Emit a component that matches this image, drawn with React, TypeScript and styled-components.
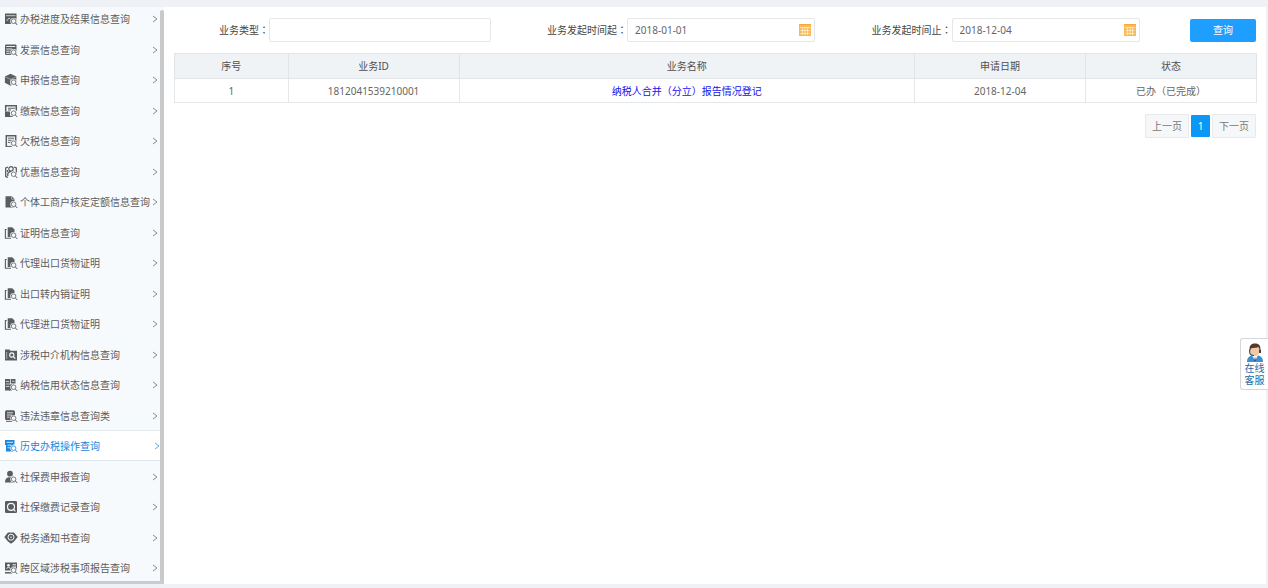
import React from "react";
import styled, { createGlobalStyle } from "styled-components";

const GlobalStyle = createGlobalStyle`
  * { box-sizing: border-box; }
  html, body, #root { height: 100%; }
  body {
    margin: 0;
    background: #eff1f6;
    color: #666;
    font: 10px/16px "Noto Sans", "Noto Sans CJK SC", sans-serif;
  }
  button, input { font: inherit; color: inherit; }
`;

const Page = styled.div`
  display: flex;
  min-height: 100%;
  padding: 7px 2px 4px 0;
`;

const Sidebar = styled.nav`
  display: flex;
  flex: none;
  width: 164px;
  background: #f6fafd;
  border-bottom: 3px solid #cbcccd;
`;

const Menu = styled.ul`
  flex: 1;
  display: flex;
  flex-direction: column;
  justify-content: space-between;
  margin: 0;
  padding: 0 0 1px;
  list-style: none;
`;

const Rail = styled.div`
  width: 4px;
  margin-top: 3px;
  border-radius: 2px 2px 0 0;
  background: #c8c9ca;
`;

const MenuItem = styled.li`
  height: 24px;
`;

const MenuLink = styled.a<{ $active?: boolean }>`
  display: flex;
  align-items: center;
  gap: 2px;
  height: 30px;
  margin: -3px 0;
  padding: 0 ${(p) => (p.$active ? 0 : 2)}px 0 4px;
  color: ${(p) => (p.$active ? "#1787e0" : "#5c5c5c")};
  background: ${(p) => (p.$active ? "#fff" : "transparent")};
  box-shadow: ${(p) => (p.$active ? "0 -1px #e3eaee, inset 0 -1px #dce8ee" : "none")};
  text-decoration: none;
  white-space: nowrap;
`;

const MenuText = styled.span`
  flex: 1;
  min-width: 0;
`;

const IconSvg = styled.svg`
  flex: none;
  width: 14px;
  height: 14px;
`;

const Chevron = styled.svg`
  flex: none;
  width: 6px;
  height: 8px;
  margin-left: -6px;
  fill: none;
  stroke: currentColor;
  opacity: 0.7;
`;

const Main = styled.main`
  flex: 1;
  min-width: 0;
  padding: 11px 9px 20px 10px;
  background: #fff;
`;

const Filters = styled.form`
  display: grid;
  grid-template-columns: 317fr 324fr 325fr 117fr;
  align-items: center;
  height: 24px;
  margin-bottom: 11px;
`;

const Field = styled.div`
  display: flex;
  align-items: center;
`;

const Label = styled.label`
  flex: 1;
  color: #444;
  text-align: right;
  white-space: nowrap;
`;

const Colon = styled.span`
  font-family: "Noto Sans CJK JP", sans-serif;
`;

const InputBox = styled.div<{ $share: number }>`
  display: flex;
  align-items: center;
  width: ${(p) => p.$share}%;
  height: 24px;
  padding: 0 3px 0 7px;
  border: 1px solid #e4e6e8;
  border-radius: 2px;
  background: #fff;
`;

const TextInput = styled.input`
  flex: 1;
  min-width: 0;
  height: 20px;
  padding: 0;
  border: 0;
  outline: 0;
  background: transparent;
`;

const CalendarButton = styled.button`
  display: flex;
  padding: 0;
  border: 0;
  background: none;
  cursor: pointer;
`;

const SearchButton = styled.button`
  justify-self: end;
  width: 66px;
  height: 23px;
  margin-right: 1px;
  padding: 0;
  border: 0;
  border-radius: 2px;
  background: #1e9fff;
  color: #fff;
  cursor: pointer;
`;

const Table = styled.table`
  width: 100%;
  border-collapse: collapse;
  table-layout: fixed;
  text-align: center;
`;

const Col = styled.col<{ $share: number }>`
  width: ${(p) => p.$share}%;
`;

const HeadCell = styled.th`
  height: 25px;
  padding: 0;
  border: 1px solid #e1e5e8;
  background: #eff3f6;
  color: #505050;
  font-weight: 400;
`;

const Cell = styled.td`
  height: 24px;
  padding: 0;
  border: 1px solid #e4e7e9;
`;

const NameLink = styled.a`
  color: #1212ee;
  text-decoration: none;
`;

const Pager = styled.div`
  display: flex;
  justify-content: flex-end;
  align-items: center;
  gap: 2px;
  margin-top: 11px;
  padding-right: 1px;
`;

const PageButton = styled.button<{ $current?: boolean }>`
  width: ${(p) => (p.$current ? 19 : 44)}px;
  height: ${(p) => (p.$current ? 22 : 24)}px;
  padding: 0;
  border: ${(p) => (p.$current ? "0" : "1px solid #e7e9ec")};
  border-radius: 1px;
  background: ${(p) => (p.$current ? "#0a97f5" : "#f6f7f9")};
  color: ${(p) => (p.$current ? "#fff" : "#777")};
  cursor: pointer;
`;

const Service = styled.button`
  position: fixed;
  top: 338px;
  right: 0;
  display: flex;
  flex-direction: column;
  align-items: center;
  width: 28px;
  height: 52px;
  padding: 3px 0 0;
  border: 1px solid #d5d8db;
  border-right: 0;
  border-radius: 3px 0 0 3px;
  background: #fff;
  color: #2467a5;
  line-height: 12px;
  cursor: pointer;
`;

const Avatar = styled.svg`
  flex: none;
  width: 18px;
  height: 20px;
`;

/* Magnifier laid over the lower right corner of an icon, with a cleared ring round it. */
const Lens = ({ bg }: { bg: string }) => (
  <>
    <circle cx="9.6" cy="9.2" r="3.3" fill={bg} />
    <circle cx="9.6" cy="9.2" r="2.3" fill="none" stroke="currentColor" strokeWidth=".8" />
    <path d="M11.3 10.9 13.3 13" fill="none" stroke="currentColor" strokeWidth="1" />
  </>
);

const shapes: Record<string, (bg: string) => React.ReactNode> = {
  progress: (bg) => (
    <>
      <path d="M1 1.500h11.500V12H1z" fill="currentColor" />
      <path d="M2 3.700h9.500M2.500 9 5 6l1.500 1.500" fill="none" stroke={bg} strokeWidth=".7" />
    </>
  ),
  invoice: (bg) => (
    <>
      <rect x="1" y="1.500" width="11.500" height="10.500" rx="1" fill="currentColor" />
      <path d="M2.200 3.500h9M2.200 6h6M2.200 8.200h3.500M2.200 10.400h3.500" stroke={bg} strokeWidth=".9" />
    </>
  ),
  cube: (bg) => (
    <>
      <path d="m6.500 .8 5.800 2.600v6.200L6.500 12.800.9 9.800V3.600z" fill="currentColor" />
      <path d="M1.300 4 6.500 6.300 12 4M6.500 6.300v6" fill="none" stroke={bg} strokeWidth=".4" />
    </>
  ),
  payment: () => (
    <>
      <path d="M1.700 7.500V1.700h10.600v5" fill="none" stroke="currentColor" strokeWidth="1.500" />
      <path d="M4 4.200h7M4 6h3" stroke="currentColor" strokeWidth="1.100" />
      <path d="M1 7.500h5V13H1z" fill="currentColor" />
      <path d="M6 12.300h3" stroke="currentColor" strokeWidth="1.200" />
    </>
  ),
  arrears: () => (
    <>
      <path d="M2.300 12.500V1.700h9.400v10" fill="none" stroke="currentColor" strokeWidth="1.500" />
      <path d="M4 4.200h6M4 6.300h6M4 8.400h3M1.600 12.400H8" fill="none" stroke="currentColor" />
    </>
  ),
  people: () => (
    <>
      <path d="M4 2 1.700 3v8.500L4 12.300M10 2l2.300 1v6" fill="none" stroke="currentColor" strokeWidth="1.300" />
      <circle cx="7" cy="3.800" r="2.200" fill="none" stroke="currentColor" strokeWidth="1.200" />
      <path d="M3.800 11V8.500L5.500 6.700h3M3.500 5v2" fill="none" stroke="currentColor" strokeWidth="1.300" />
    </>
  ),
  document: (bg) => (
    <>
      <path d="M1.500 1.200h6.300L10.500 4v8.500h-9z" fill="currentColor" />
      <path d="M7.600 1.500v2.700h2.700" fill="none" stroke={bg} strokeWidth=".5" />
    </>
  ),
  papers: () => (
    <>
      <path d="M3.700 1.200h4.500L10.500 3.500v7.500H3.700z" fill="currentColor" />
      <path d="M2.700 3.500H1.400v8.800H7" fill="none" stroke="currentColor" strokeWidth="1.100" />
    </>
  ),
  folder: (bg) => (
    <>
      <path d="M1 1.500h4.500l1 1.200h6.500v9.800H1z" fill="currentColor" />
      <circle cx="7.800" cy="7" r="2.100" fill="none" stroke={bg} strokeWidth="1.100" />
      <path d="m9.300 8.600 2 2" stroke={bg} strokeWidth="1.200" />
      <path d="M2.700 4v7" stroke={bg} strokeWidth=".5" />
    </>
  ),
  credit: (bg) => (
    <>
      <path d="M1 1h5v11.500H1zM6.700 1H11.500v4.500H6.700z" fill="currentColor" />
      <path d="M5 6h3v6.500H5z" fill="currentColor" />
      <path d="M1.800 3.500h3.400M1.800 6h5M1.800 8.500h3.500M8 3.200h2.500" stroke={bg} strokeWidth=".7" />
    </>
  ),
  violation: (bg) => (
    <>
      <rect x="1" y="1.200" width="10" height="9.800" rx="1.500" fill="currentColor" />
      <path d="M3 3.800h6M3 6h5M3 8.200h2.500" stroke={bg} strokeWidth=".8" />
      <path d="M2 12.300h6" stroke="currentColor" />
    </>
  ),
  history: (bg) => (
    <>
      <path d="M1 1h9.500v4.500H9v7H2V6H1z" fill="currentColor" />
      <path d="M2.500 3.300h6.500M3.500 6.200h4M3.500 8.800h2.500" stroke={bg} strokeWidth=".8" />
    </>
  ),
  person: () => (
    <>
      <circle cx="6" cy="3.700" r="2.900" fill="currentColor" />
      <path d="M1 12.500c0-4 2-5.300 5-5.300s5 1.300 5 5.300z" fill="currentColor" />
    </>
  ),
  record: (bg) => (
    <>
      <rect x="1" y="1" width="12" height="12" rx="1.200" fill="currentColor" />
      <circle cx="7" cy="6.800" r="3.500" fill="none" stroke={bg} strokeWidth="1.200" />
      <path d="m9.200 9.200 2.200 2.200" stroke={bg} strokeWidth="1.200" />
    </>
  ),
  notice: (bg) => (
    <>
      <path d="M4 1.500h6L13.700 6 10 10.500l-3 2.300-3-2.300L.3 6z" fill="currentColor" />
      <circle cx="7" cy="6.200" r="3" fill="none" stroke={bg} />
      <circle cx="7" cy="6.200" r=".8" fill={bg} />
    </>
  ),
  region: (bg) => (
    <>
      <path d="M1 1.500h12v8H1z" fill="currentColor" />
      <path d="M1 11.800h7" stroke="currentColor" strokeWidth="1.500" />
      <path d="M2.800 7.800c0-2 3.400-2 3.400 0M8.500 3.800H12M8.500 6H12" fill="none" stroke={bg} />
      <circle cx="4.500" cy="4.200" r="1.300" fill={bg} />
    </>
  ),
};

const withoutLens = ["folder", "record", "notice"];

const MenuIcon = ({ name, bg }: { name: string; bg: string }) => (
  <IconSvg viewBox="0 0 14 14" aria-hidden="true">
    {shapes[name](bg)}
    {!withoutLens.includes(name) && <Lens bg={bg} />}
  </IconSvg>
);

const CalendarIcon = () => (
  <svg width="12" height="13" viewBox="0 0 12 13" aria-hidden="true">
    <path d="M0 0h12v12H0z" fill="#f8bb5c" />
    <path d="M0 .5h12" stroke="#f5a93a" />
    <path d="M1 3.500h10M1.500 6.500h9M1.500 9.500h9M3.500 4v7M6 4v7M8.500 4v7" stroke="#fff2da" strokeWidth=".7" />
  </svg>
);

const menu = [
  { icon: "progress", text: "办税进度及结果信息查询" },
  { icon: "invoice", text: "发票信息查询" },
  { icon: "cube", text: "申报信息查询" },
  { icon: "payment", text: "缴款信息查询" },
  { icon: "arrears", text: "欠税信息查询" },
  { icon: "people", text: "优惠信息查询" },
  { icon: "document", text: "个体工商户核定定额信息查询" },
  { icon: "papers", text: "证明信息查询" },
  { icon: "papers", text: "代理出口货物证明" },
  { icon: "papers", text: "出口转内销证明" },
  { icon: "papers", text: "代理进口货物证明" },
  { icon: "folder", text: "涉税中介机构信息查询" },
  { icon: "credit", text: "纳税信用状态信息查询" },
  { icon: "violation", text: "违法违章信息查询类" },
  { icon: "history", text: "历史办税操作查询", active: true },
  { icon: "person", text: "社保费申报查询" },
  { icon: "record", text: "社保缴费记录查询" },
  { icon: "notice", text: "税务通知书查询" },
  { icon: "region", text: "跨区域涉税事项报告查询" },
];

const fields = [
  { id: "type", label: "业务类型", value: "", share: 70, date: false },
  { id: "from", label: "业务发起时间起", value: "2018-01-01", share: 58, date: true },
  { id: "to", label: "业务发起时间止", value: "2018-12-04", share: 58, date: true },
];

const columns = [
  { title: "序号", share: 10.5 },
  { title: "业务ID", share: 15.8 },
  { title: "业务名称", share: 42.1 },
  { title: "申请日期", share: 15.8 },
  { title: "状态", share: 15.8 },
];

export default function App() {
  return (
    <>
      <GlobalStyle />
      <Page>
        <Sidebar aria-label="查询">
          <Menu>
            {menu.map((item) => (
              <MenuItem key={item.text}>
                <MenuLink href="#" $active={item.active} aria-current={item.active ? "page" : undefined}>
                  <MenuIcon name={item.icon} bg={item.active ? "#fff" : "#f6fafd"} />
                  <MenuText>{item.text}</MenuText>
                  <Chevron viewBox="0 0 6 8" aria-hidden="true">
                    <path d="m1 1 4 3-4 3" />
                  </Chevron>
                </MenuLink>
              </MenuItem>
            ))}
          </Menu>
          <Rail />
        </Sidebar>
        <Main>
          <Filters onSubmit={(e) => e.preventDefault()}>
            {fields.map((f) => (
              <Field key={f.id}>
                <Label htmlFor={f.id}>
                  {f.label}
                  <Colon>：</Colon>
                </Label>
                <InputBox $share={f.share}>
                  <TextInput id={f.id} type="text" defaultValue={f.value} />
                  {f.date && (
                    <CalendarButton type="button" aria-label="选择日期">
                      <CalendarIcon />
                    </CalendarButton>
                  )}
                </InputBox>
              </Field>
            ))}
            <SearchButton type="submit">查询</SearchButton>
          </Filters>
          <Table>
            <colgroup>
              {columns.map((c) => (
                <Col key={c.title} $share={c.share} />
              ))}
            </colgroup>
            <thead>
              <tr>
                {columns.map((c) => (
                  <HeadCell key={c.title} scope="col">{c.title}</HeadCell>
                ))}
              </tr>
            </thead>
            <tbody>
              <tr>
                <Cell>1</Cell>
                <Cell>1812041539210001</Cell>
                <Cell><NameLink href="#">纳税人合并（分立）报告情况登记</NameLink></Cell>
                <Cell>2018-12-04</Cell>
                <Cell>已办（已完成）</Cell>
              </tr>
            </tbody>
          </Table>
          <Pager>
            <PageButton type="button">上一页</PageButton>
            <PageButton type="button" $current>1</PageButton>
            <PageButton type="button">下一页</PageButton>
          </Pager>
        </Main>
      </Page>
      <Service type="button">
        <Avatar viewBox="0 0 18 20" aria-hidden="true">
          <path d="M1 20c0-4 2-6 5-6.500h6c3 .5 5 2.500 5 6.500z" fill="#3f8fd0" />
          <path d="m6 13 3 6 3-6z" fill="#fff" />
          <path d="M9 14.500 8 19h2z" fill="#2c4f7c" />
          <ellipse cx="9" cy="8.500" rx="4.600" ry="5.500" fill="#f3c7a4" />
          <path d="M4 9C2.500 4 5 1.500 9 1.500S15.500 4 14 9c-.5-2-1-3.500-2-4C9.500 6.500 6 5.500 5 6.500z" fill="#54382b" />
          <path d="M3.700 7.500v3c.3 2 2 3 4.300 3" fill="none" stroke="#444" strokeWidth="1.200" />
          <path d="M13 7.500h2v3.500h-2z" fill="#444" />
        </Avatar>
        <span>在线</span>
        <span>客服</span>
      </Service>
    </>
  );
}
